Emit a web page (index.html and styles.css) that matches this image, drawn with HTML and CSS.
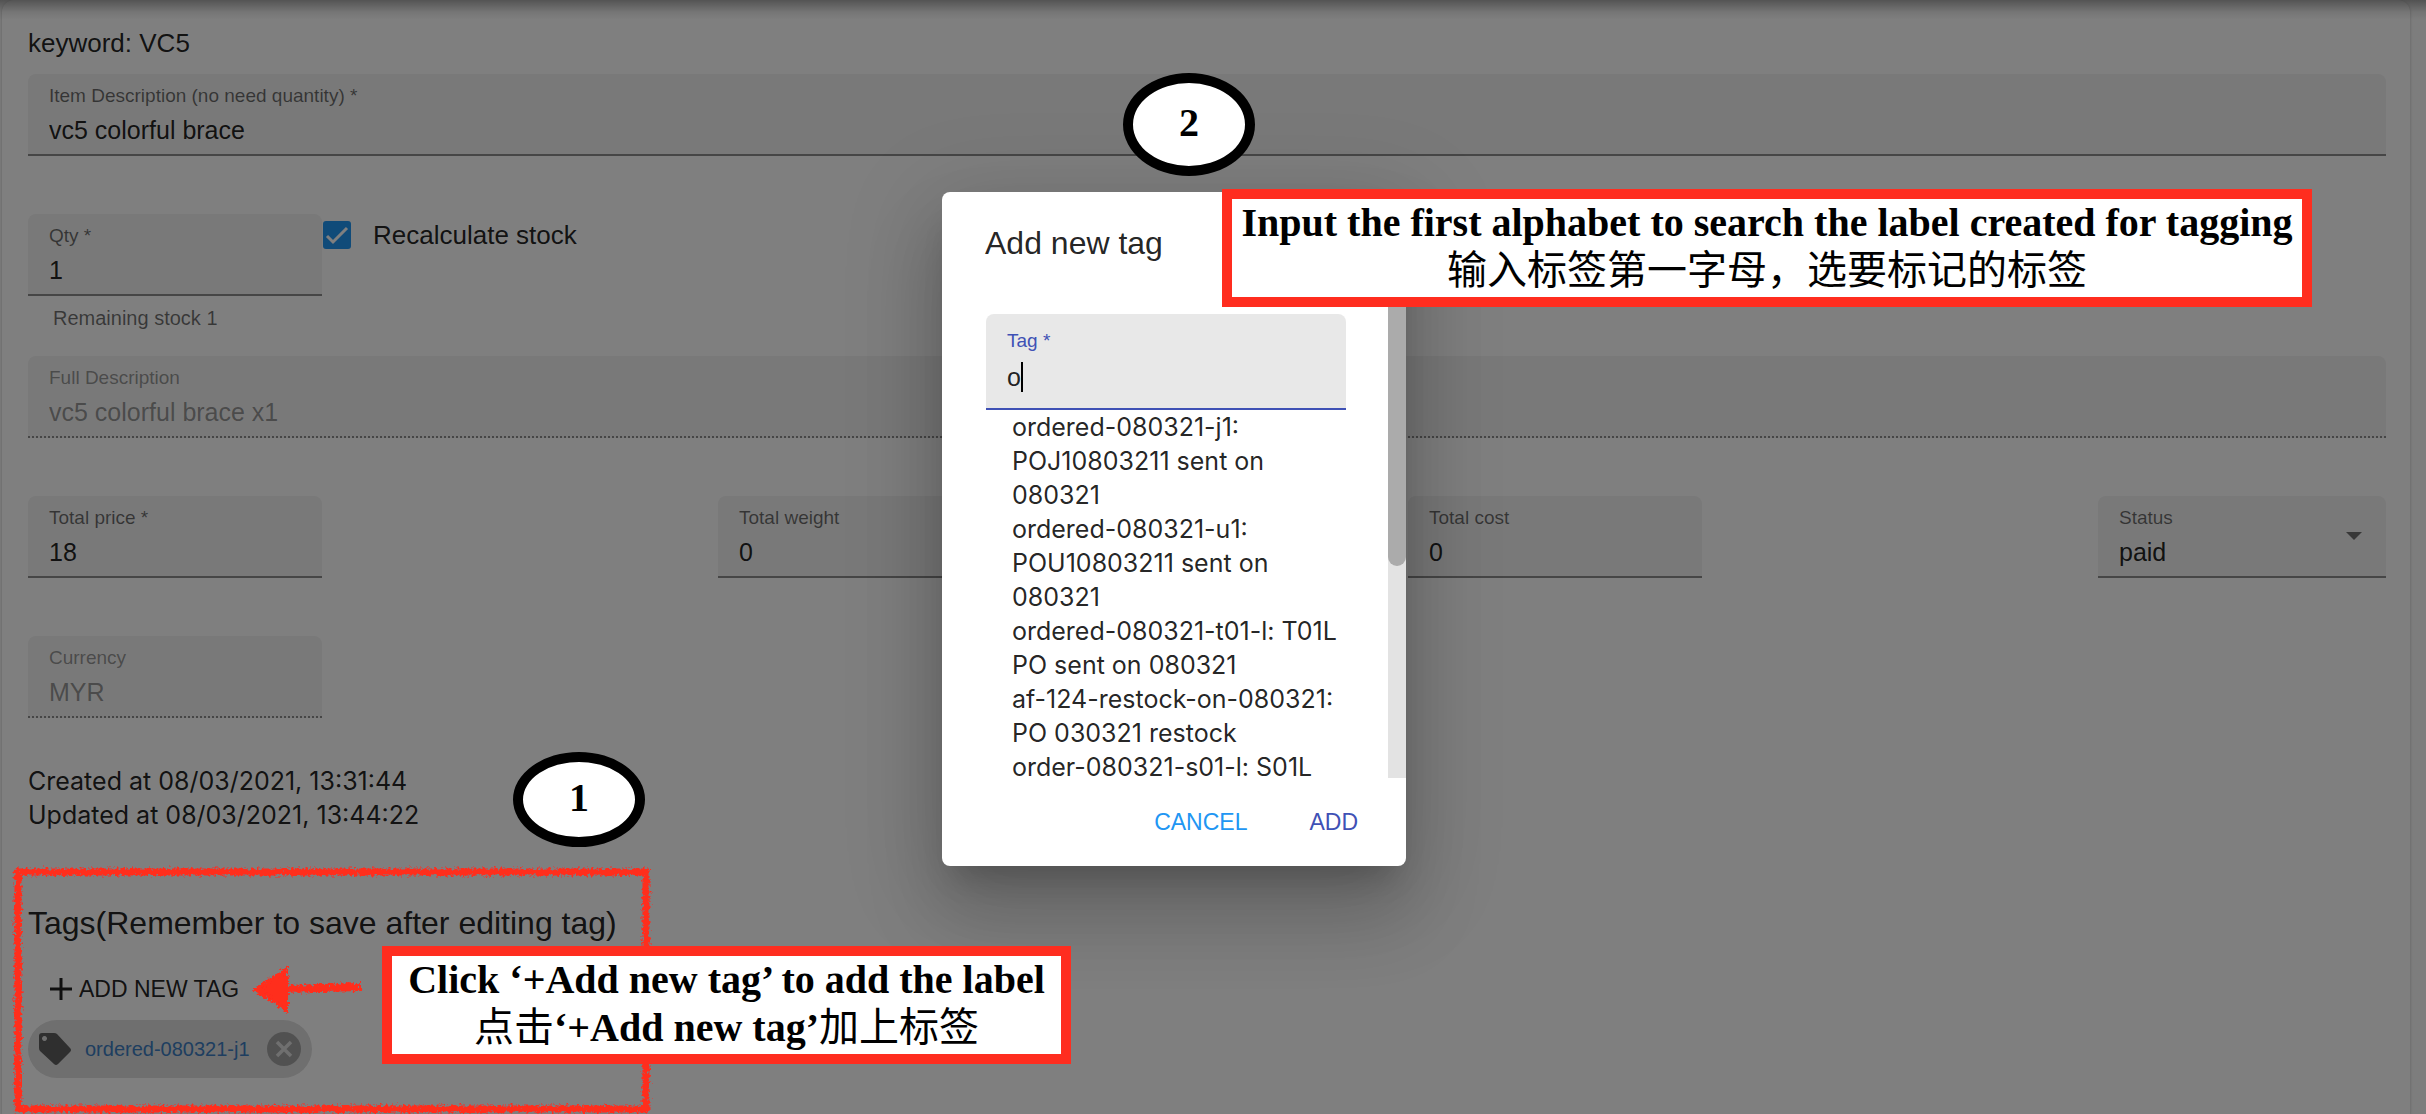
FILE: index.html
```html
<!DOCTYPE html>
<html lang="en">
<head>
  <meta charset="UTF-8">
  <meta name="viewport" content="width=device-width, initial-scale=1">
  <title>Edit item</title>
  <link rel="stylesheet" href="styles.css">
</head>
<body>
  <main class="card">
    <p class="keyword">keyword: VC5</p>

    <div class="field">
      <label for="item-desc">Item Description (no need quantity) *</label>
      <input type="text" id="item-desc" value="vc5 colorful brace">
    </div>

    <div class="row row-qty">
      <div>
        <div class="field field-small">
          <label for="qty">Qty *</label>
          <input type="text" id="qty" value="1">
        </div>
        <p class="helper">Remaining stock 1</p>
      </div>
      <label class="check">
        <input type="checkbox" checked>
        Recalculate stock
      </label>
    </div>

    <div class="field disabled">
      <label for="full-desc">Full Description</label>
      <input type="text" id="full-desc" value="vc5 colorful brace x1" disabled>
    </div>

    <div class="row row-between">
      <div class="field field-small">
        <label for="price">Total price *</label>
        <input type="text" id="price" value="18">
      </div>
      <div class="field field-small">
        <label for="weight">Total weight</label>
        <input type="text" id="weight" value="0">
      </div>
      <div class="field field-small">
        <label for="cost">Total cost</label>
        <input type="text" id="cost" value="0">
      </div>
      <div class="field field-select">
        <label for="status">Status</label>
        <select id="status">
          <option>paid</option>
        </select>
      </div>
    </div>

    <div class="field field-small disabled">
      <label for="currency">Currency</label>
      <input type="text" id="currency" value="MYR" disabled>
    </div>

    <div class="dates">
      <p>Created at 08/03/2021, 13:31:44</p>
      <p>Updated at 08/03/2021, 13:44:22</p>
    </div>

    <h2 class="tags-title">Tags(Remember to save after editing tag)</h2>
    <button class="btn-add-tag">
      <svg width="24" height="24" viewBox="0 0 24 24"><path d="M12 1v22M1 12h22" stroke="currentColor" stroke-width="3"/></svg>
      ADD NEW TAG
    </button>
    <div class="chip">
      <svg width="34" height="34" viewBox="0 0 34 34" fill="#5f5f5f">
        <path fill-rule="evenodd" d="M4 1h12q2 0 3 1l13 14q2 2 0 4L20 32q-2 2-4 0L2 19q-1-1-1-3V4q0-3 3-3zM6.500 4a2.500 2.500 0 1 0 .010 0z"/>
      </svg>
      <a href="#">ordered-080321-j1</a>
      <button class="chip-delete" aria-label="Remove tag">
        <svg width="34" height="34" viewBox="0 0 34 34">
          <circle cx="17" cy="17" r="17" fill="#a3a3a3"/>
          <path d="M10 10l14 14M24 10L10 24" stroke="#dedede" stroke-width="3.500"/>
        </svg>
      </button>
    </div>
  </main>

  <div class="appbar-shadow"></div>

  <div class="backdrop">
    <div class="dialog" role="dialog" aria-labelledby="dialog-title">
      <h2 id="dialog-title">Add new tag</h2>
      <div class="dialog-body">
        <div class="dialog-content">
          <div class="field field-active">
            <label for="tag">Tag *</label>
            <div class="tag-input">
              <input type="text" id="tag" value="o">
              <span class="caret"></span>
            </div>
          </div>
          <ul class="suggestions">
            <li>ordered-080321-j1: POJ10803211 sent on 080321</li>
            <li>ordered-080321-u1: POU10803211 sent on 080321</li>
            <li>ordered-080321-t01-l: T01L PO sent on 080321</li>
            <li>af-124-restock-on-080321: PO 030321 restock</li>
            <li>order-080321-s01-l: S01L</li>
          </ul>
        </div>
        <div class="scrollbar"><div class="thumb"></div></div>
      </div>
      <div class="dialog-actions">
        <button class="btn-cancel">CANCEL</button>
        <button class="btn-add">ADD</button>
      </div>
    </div>
  </div>

  <!-- guide marks over the page -->
  <svg class="sketch" width="660" height="260" viewBox="0 0 660 260">
    <filter id="rough" x="-5%" y="-5%" width="110%" height="110%">
      <feTurbulence type="fractalNoise" baseFrequency="0.35" numOctaves="3" seed="4"/>
      <feDisplacementMap in="SourceGraphic" scale="8" xChannelSelector="R" yChannelSelector="G"/>
    </filter>
    <g filter="url(#rough)" fill="none" stroke="#ff2d1f">
      <path d="M18 18H646V255H18z" stroke-width="7"/>
      <path d="M282 135L360 133" stroke-width="8"/>
      <path d="M256 136L286 116V155z" fill="#ff2d1f" stroke-width="4"/>
    </g>
  </svg>
  <div class="step step-one">1</div>
  <div class="step step-two">2</div>
  <div class="callout callout-one">
    <p>Click ‘+Add new tag’ to add the label</p>
    <p><span class="zh">点击</span>‘+Add new tag’<span class="zh">加上标签</span></p>
  </div>
  <div class="callout callout-two">
    <p>Input the first alphabet to search the label created for tagging</p>
    <p><span class="zh">输入标签第一字母，选要标记的标签</span></p>
  </div>
</body>
</html>
```
FILE: styles.css
```css
* {
  box-sizing: border-box;
}
body {
  margin: 0;
  height: 100vh;
  overflow: hidden;
  position: relative;
  background: #fafafa;
  color: rgba(0,0,0,0.87);
  font-family: "Liberation Sans", Arial, sans-serif;
  font-size: 25px;
}
p, h2, ul {
  margin: 0;
  padding: 0;
}
h2 {
  font-size: 32px;
  font-weight: normal;
  line-height: 48px;
}
input, select, button {
  font: inherit;
  color: inherit;
  border: none;
  background: none;
  padding: 0;
}
.card {
  min-height: 100vh;
  margin: 0 16px 0 2px;
  padding: 26px 24px 36px 26px;
  background: #fff;
  border-radius: 12px 12px 0 0;
  box-shadow: 0 1px 3px rgba(0,0,0,0.25);
}
.keyword {
  font-size: 26px;
  line-height: 34px;
  margin-bottom: 14px;
}

/* filled text fields */
.field {
  display: flex;
  flex-direction: column;
  height: 82px;
  padding: 12px 21px 0;
  margin-bottom: 58px;
  background: #f2f2f2;
  border-bottom: 2px solid #8c8c8c;
  border-radius: 8px 8px 0 0;
}
.field label {
  font-size: 19px;
  line-height: 20px;
  color: rgba(0,0,0,0.56);
}
.field input,
.field select {
  width: 100%;
  height: 48px;
  outline: none;
}
.field.disabled {
  border-bottom-style: dotted;
}
.field.disabled label,
.field.disabled input {
  color: rgba(0,0,0,0.4);
}
.field-small {
  width: 294px;
}
.field-select {
  width: 288px;
}
.field select {
  appearance: none;
  background: url("data:image/svg+xml,%3Csvg xmlns='http://www.w3.org/2000/svg' width='16' height='8'%3E%3Cpath d='M0 0h16L8 8z' fill='%23707070'/%3E%3C/svg%3E") no-repeat right 3px top 4px;
}
.row {
  display: flex;
}
.row-between {
  justify-content: space-between;
}
.row-qty {
  margin-bottom: 24px;
}
.row-qty .field {
  margin-bottom: 0;
}
.helper {
  margin-top: 8px;
  padding-left: 25px;
  font-size: 20px;
  line-height: 28px;
  color: rgba(0,0,0,0.56);
}
.check {
  display: flex;
  align-items: center;
  align-self: flex-start;
  gap: 22px;
  height: 42px;
  font-size: 26px;
}
.check input {
  appearance: none;
  width: 28px;
  height: 28px;
  margin: 0 0 0 1px;
  border-radius: 3px;
  background: #2196f3 url("data:image/svg+xml,%3Csvg xmlns='http://www.w3.org/2000/svg' width='28' height='28'%3E%3Cpath d='M4 15l6 6L24 7' fill='none' stroke='%23fff' stroke-width='3'/%3E%3C/svg%3E");
}
.dates {
  margin-top: -12px;
  font-family: Inter, sans-serif;
  font-size: 25px;
  line-height: 34px;
}
.tags-title {
  margin-top: 67px;
}
.btn-add-tag {
  display: flex;
  align-items: center;
  gap: 6px;
  height: 62px;
  margin-top: 11px;
  padding-left: 21px;
  font-size: 23px;
}
.chip {
  display: inline-flex;
  align-items: center;
  height: 58px;
  padding: 0 11px 0 10px;
  border-radius: 29px;
  background: #dedede;
}
.chip a {
  margin: 0 17px 0 13px;
  font-size: 20px;
  color: #3d7dc0;
  text-decoration: none;
}
.chip-delete {
  display: flex;
}
.appbar-shadow {
  position: absolute;
  top: 0;
  left: 0;
  right: 0;
  height: 20px;
  background: linear-gradient(rgba(0,0,0,0.34), rgba(0,0,0,0.08) 60%, transparent);
}

/* dialog */
.backdrop {
  position: absolute;
  inset: 0;
  display: flex;
  justify-content: center;
  align-items: center;
  padding: 0 78px 56px 0;
  background: rgba(0,0,0,0.5);
}
.dialog {
  width: 464px;
  background: #fff;
  border-radius: 8px;
  box-shadow: 0 22px 30px -14px rgba(0,0,0,0.2), 0 48px 76px 6px rgba(0,0,0,0.14), 0 18px 92px 16px rgba(0,0,0,0.12);
}
.dialog h2 {
  padding: 27px 43px;
}
.dialog-body {
  display: flex;
  height: 484px;
  overflow: hidden;
}
.dialog-content {
  flex: 1;
  min-width: 0;
  padding: 20px 42px 0 44px;
}
.field-active {
  height: 96px;
  padding-top: 17px;
  margin-bottom: 0;
  background: #e8e8e8;
  border-bottom: 2px solid #3f51b5;
}
.field-active label {
  color: #3f51b5;
}
.tag-input {
  position: relative;
  margin-top: 2px;
}
.caret {
  position: absolute;
  left: 14px;
  top: 9px;
  width: 2px;
  height: 30px;
  background: #000;
}
.suggestions {
  list-style: none;
  width: 336px;
  margin-left: 26px;
  font-family: Inter, sans-serif;
  font-size: 25px;
  line-height: 34px;
}
.scrollbar {
  flex: none;
  width: 18px;
  background: #e3e3e3;
}
.thumb {
  height: 272px;
  background: #ababab;
  border-radius: 9px;
}
.dialog-actions {
  display: flex;
  justify-content: flex-end;
  align-items: center;
  gap: 62px;
  height: 88px;
  padding-right: 48px;
  font-size: 23px;
}
.btn-cancel {
  color: #2196f3;
}
.btn-add {
  color: #3f51b5;
}

/* guide marks */
.sketch {
  position: absolute;
  left: 0;
  top: 854px;
}
.step {
  position: absolute;
  display: flex;
  justify-content: center;
  align-items: center;
  width: 132px;
  padding-bottom: 4px;
  border: 10px solid #000;
  border-radius: 50%;
  background: #fff;
  color: #000;
  font: bold 40px "Liberation Serif", serif;
}
.step-one {
  left: 513px;
  top: 752px;
  height: 95px;
}
.step-two {
  left: 1123px;
  top: 73px;
  height: 103px;
}
.callout {
  position: absolute;
  padding-bottom: 2px;
  border: 10px solid #ff2d1f;
  background: #fff;
  color: #000;
  font: bold 40px/48px "Liberation Serif", serif;
  text-align: center;
  white-space: nowrap;
}
.callout-one {
  left: 382px;
  top: 946px;
  width: 689px;
}
.callout-two {
  left: 1222px;
  top: 189px;
  width: 1090px;
}
.zh {
  font-family: "Noto Sans CJK SC", sans-serif;
  font-weight: normal;
  line-height: 30px;
}
```
